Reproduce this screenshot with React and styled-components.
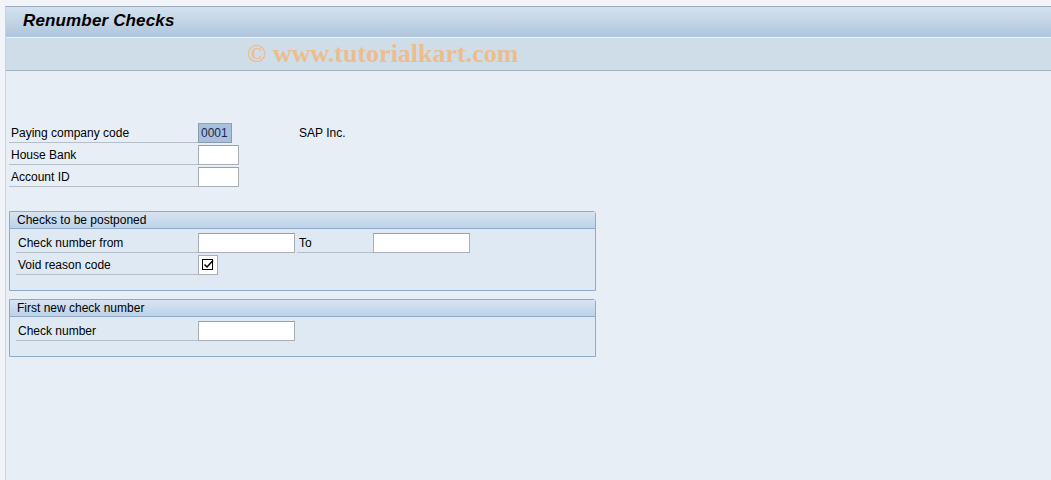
import React from "react";
import styled, { createGlobalStyle } from "styled-components";

const Global = createGlobalStyle`
  html, body {
    margin: 0;
    padding: 0;
    background: #f1f4f8;
  }
  body {
    font-family: "Liberation Sans", Arial, sans-serif;
    font-size: 12px;
    color: #000;
  }
`;

export default function App() {
  return (
    <>
      <Global />
      <Page>
        <Frame>
          <TitleBar>
            <Title>Renumber Checks</Title>
          </TitleBar>
          <Toolbar>
            <Watermark>© www.tutorialkart.com</Watermark>
          </Toolbar>
          <Content>
            <Fields>
              <Row>
                <Label>Paying company code</Label>
                <Input width={34} highlighted>0001</Input>
                <Plain>SAP Inc.</Plain>
              </Row>
              <Row>
                <Label>House Bank</Label>
                <Input width={41} />
              </Row>
              <Row>
                <Label>Account ID</Label>
                <Input width={41} />
              </Row>
            </Fields>

            <Group>
              <GroupHeader>Checks to be postponed</GroupHeader>
              <GroupBody>
                <Row>
                  <Label inGroup>Check number from</Label>
                  <Input width={97} />
                  <ToLabel>To</ToLabel>
                  <Input width={97} />
                </Row>
                <Row>
                  <Label inGroup>Void reason code</Label>
                  <CheckBox>
                    <svg width="12" height="12" viewBox="0 0 12 12">
                      <rect x="0.5" y="0.5" width="10" height="10" fill="none" stroke="#000" strokeWidth="1" />
                      <path d="M2.5 5.5 L5 8 L11 1.5" fill="none" stroke="#000" strokeWidth="1.5" />
                    </svg>
                  </CheckBox>
                </Row>
              </GroupBody>
            </Group>

            <Group>
              <GroupHeader>First new check number</GroupHeader>
              <GroupBody>
                <Row>
                  <Label inGroup>Check number</Label>
                  <Input width={97} />
                </Row>
              </GroupBody>
            </Group>
          </Content>
        </Frame>
      </Page>
    </>
  );
}

const Page = styled.div`
  width: 1051px;
  height: 480px;
  padding-top: 6px;
  box-sizing: border-box;
  overflow: hidden;
`;
const Frame = styled.div`
  margin-left: 5px;
  height: 100%;
  display: flex;
  flex-direction: column;
  border-left: 1px solid #c8d1dd;
  border-top: 1px solid #9ba9be;
`;
const TitleBar = styled.div`
  height: 30px;
  display: flex;
  align-items: center;
  padding-left: 17px;
  background: linear-gradient(to bottom, #d3e2ef 0%, #c3d4e4 50%, #aec5dd 100%);
  border-bottom: 1px solid #eef3f8;
`;
const Title = styled.h1`
  margin: 0 0 2px 0;
  font-family: "Liberation Sans", Arial, sans-serif;
  font-size: 17px;
  font-weight: bold;
  font-style: italic;
  color: #000;
  letter-spacing: 0.15px;
`;
const Toolbar = styled.div`
  height: 32px;
  background: #cfdde8;
  border-bottom: 1px solid #a2b2c5;
  display: flex;
  align-items: center;
  padding-left: 241px;
`;
const Watermark = styled.span`
  font-family: "Liberation Serif", "Times New Roman", serif;
  font-weight: bold;
  font-size: 26px;
  color: #ebbd8f;
`;
const Content = styled.div`
  flex: 1;
  background: #e7eef6;
  padding: 52px 0 0 3px;
`;
const Fields = styled.div`
  display: flex;
  flex-direction: column;
  margin-bottom: 22px;
`;
const Row = styled.div`
  height: 22px;
  display: flex;
  align-items: flex-start;
`;
const Label = styled.div`
  width: ${(p) => (p.inGroup ? 180 : 187)}px;
  height: 19px;
  line-height: 20px;
  padding-left: 2px;
  border-bottom: 1px solid #b5bfca;
  white-space: nowrap;
`;
const Input = styled.div`
  width: ${(p) => p.width}px;
  height: 20px;
  box-sizing: border-box;
  border: 1px solid ${(p) => (p.highlighted ? "#8a9bb0" : "#a9afb7")};
  border-top-color: #9aa1aa;
  background: ${(p) => (p.highlighted ? "#a9c0dc" : "#fff")};
  color: #1c2550;
  line-height: 18px;
  padding-left: 2px;
  font-size: 12px;
`;
const Plain = styled.div`
  margin-left: 67px;
  line-height: 20px;
`;
const ToLabel = styled.div`
  width: 74px;
  height: 19px;
  margin-left: 2px;
  padding-left: 2px;
  line-height: 20px;
  border-bottom: 1px solid #b5bfca;
`;
const CheckBox = styled.div`
  width: 20px;
  height: 20px;
  box-sizing: border-box;
  border: 1px solid #a9afb7;
  background: #fff;
  display: flex;
  align-items: center;
  justify-content: center;
`;
const Group = styled.div`
  width: 587px;
  box-sizing: border-box;
  margin-bottom: 8px;
  border: 1px solid #8fa9c8;
  border-radius: 0 3px 0 0;
  background: #dfe9f3;
`;
const GroupHeader = styled.div`
  height: 16px;
  line-height: 16px;
  padding-left: 7px;
  background: linear-gradient(to bottom, #d7e4f1 0%, #bdd2e8 100%);
  border-bottom: 1px solid #8fa9c8;
`;
const GroupBody = styled.div`
  padding: 4px 0 13px 6px;
`;
